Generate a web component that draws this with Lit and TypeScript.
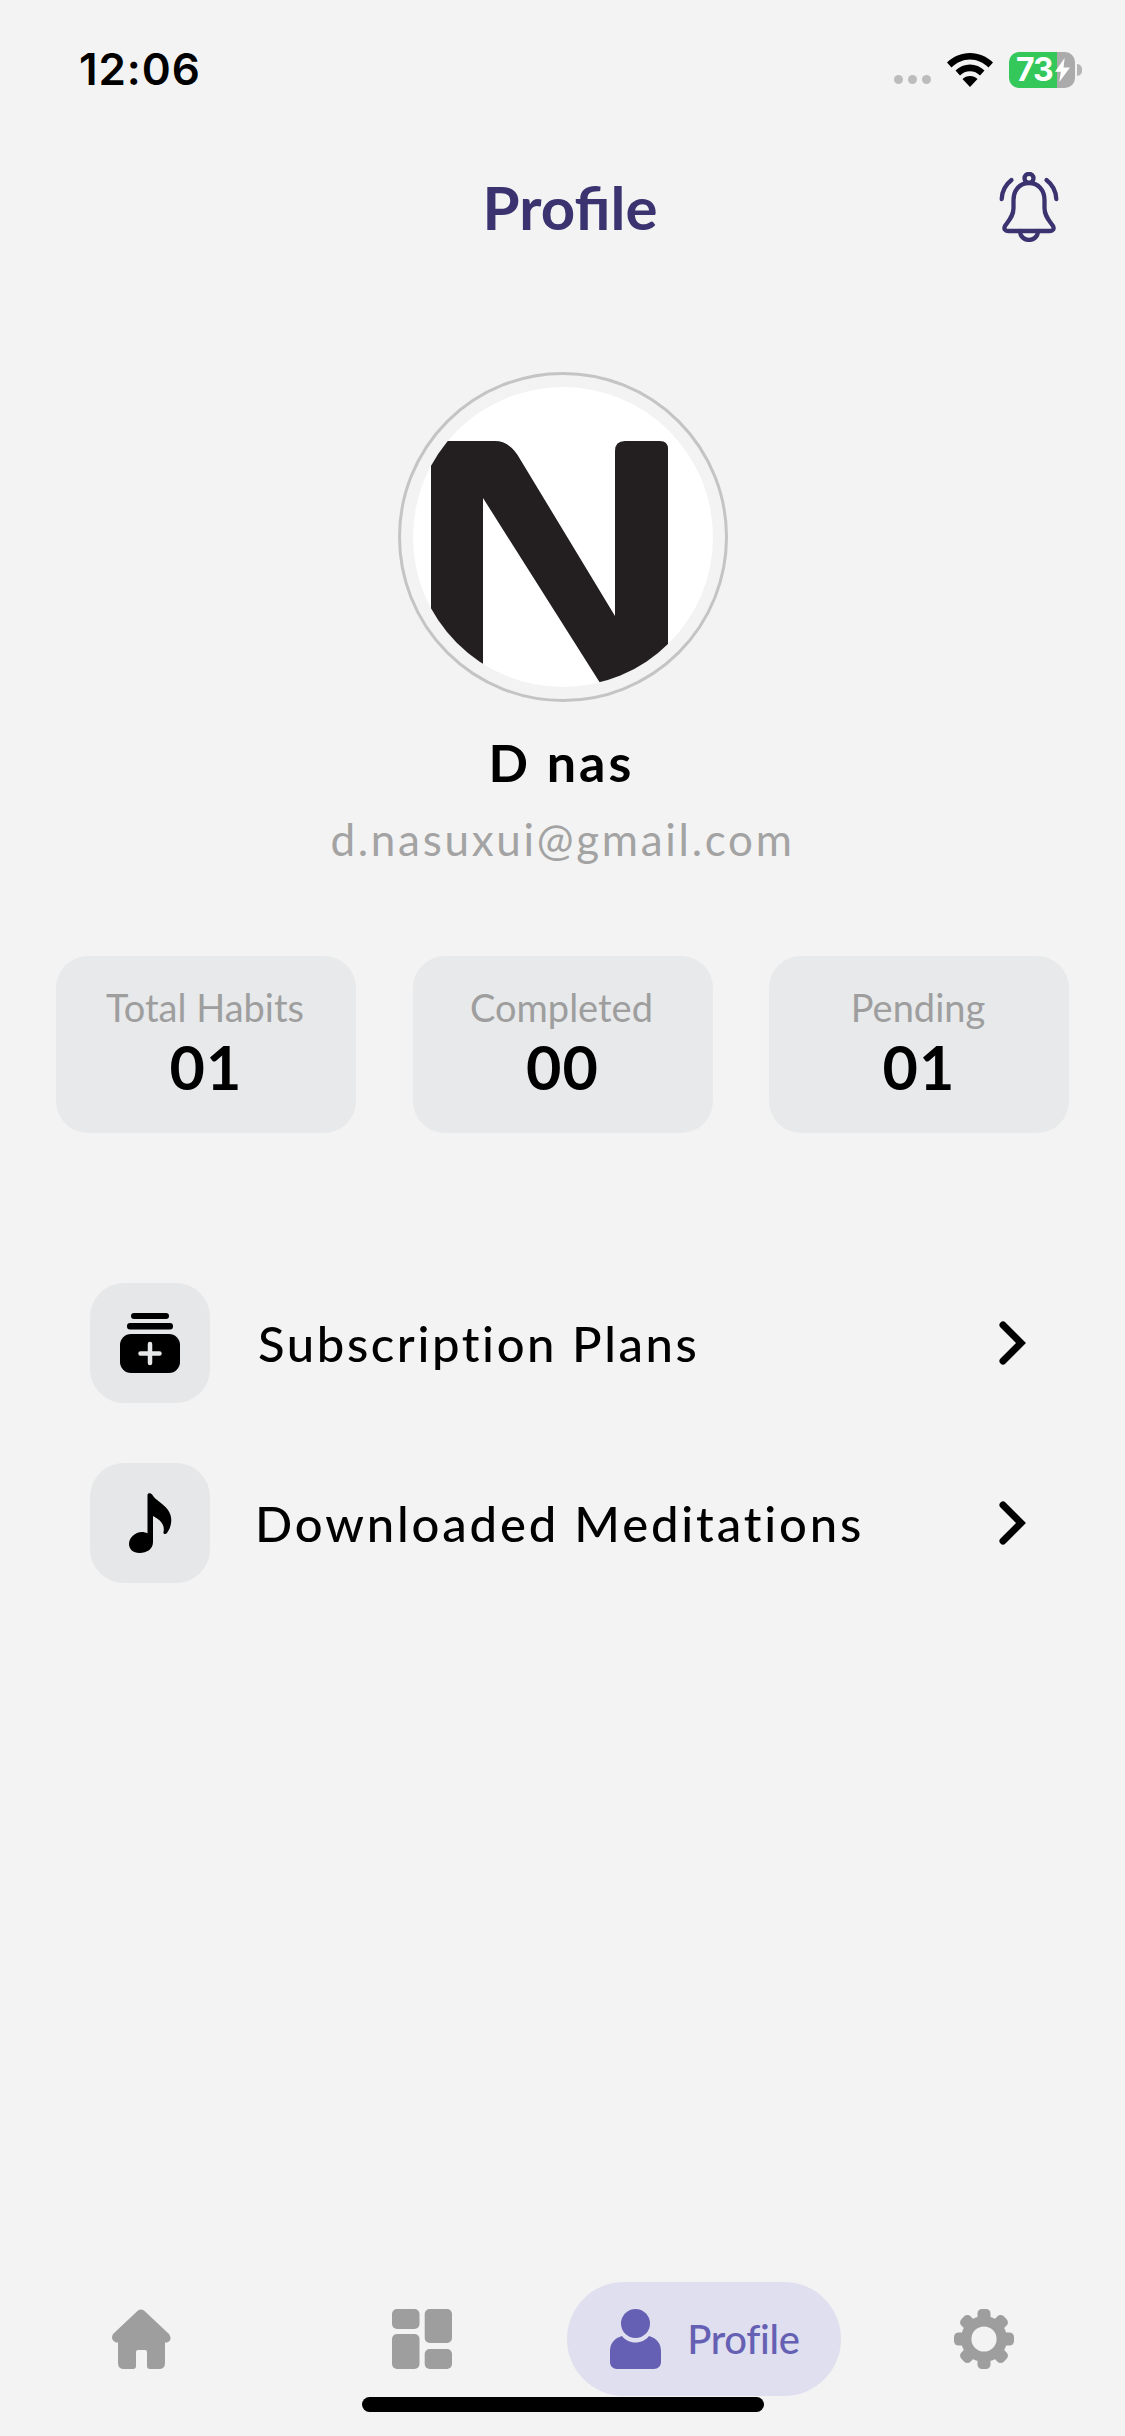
import { LitElement, html, css, svg, unsafeCSS } from "lit";
import { customElement } from "lit/decorators.js";

const FONT = unsafeCSS(`"Lato", "Noto Sans", sans-serif`);

@customElement("app-root")
export class AppRoot extends LitElement {
  static styles = css`
    :host { display: block; width: 1125px; height: 2436px; background: #f3f3f3; font-family: ${FONT}; overflow: hidden; }
    .page { display: flex; flex-direction: column; height: 2436px; }
    .status { display: flex; align-items: center; justify-content: space-between; height: 51px; margin-top: 44px; padding: 0 43px 0 79px; }
    .time { font: 600 44px/51px "Inter", sans-serif; color: #000; letter-spacing: 0.9px; }
    .sys { display: flex; align-items: center; }
    .dots { display: flex; gap: 5px; margin-right: 16px; margin-top: 20px; }
    .dots i { width: 9px; height: 9px; border-radius: 50%; background: #bcbcbc; display: block; }
    .wifi { display: block; margin-right: 16px; }
    .batt { width: 66px; height: 36px; border-radius: 10px; background: linear-gradient(90deg, #34c759 0 48px, #ababab 48px); color: #fff; font: 700 32px/36px "Inter", sans-serif; display: flex; align-items: center; padding-left: 7px; box-sizing: border-box; letter-spacing: -1px; }
    .batt svg { margin-left: 2px; }
    .tip { width: 5px; height: 12px; border-radius: 0 6px 6px 0; background: #b5b5b5; margin-left: 2px; }
    .head { display: grid; grid-template-columns: 1fr auto 1fr; align-items: center; margin-top: 72px; height: 80px; padding: 0 66px 0 81px; }
    .title { grid-column: 2; font: 700 60px/80px ${FONT}; color: #3b3370; }
    .bell { justify-self: end; display: block; }
    .avatar { align-self: center; margin-top: 125px; width: 330px; height: 330px; box-sizing: border-box; border: 3px solid #c4c4c4; border-radius: 50%; display: flex; align-items: center; justify-content: center; }
    .name { margin-top: 28px; padding-right: 2px; text-align: center; font-size: 52px; line-height: 64px; font-weight: 700; color: #000; letter-spacing: 3px; }
    .email { margin-top: 17px; text-align: center; font-size: 44px; line-height: 56px; color: #a3a3a3; letter-spacing: 2.7px; }
    .stats { display: grid; grid-template-columns: repeat(3, 300px); justify-content: space-between; padding: 0 56px; margin-top: 89px; }
    .stat { height: 177px; border-radius: 32px; background: #e8e9ea; display: flex; flex-direction: column; align-items: center; padding-top: 29px; box-sizing: border-box; }
    .stat .l { font-size: 38px; line-height: 44px; color: #9e9e9e; padding-right: 2px; }
    .stat .v { font-size: 61px; line-height: 66px; font-weight: 700; color: #000; letter-spacing: 1px; margin-top: 5px; }
    .menu { display: flex; flex-direction: column; gap: 60px; margin-top: 150px; padding: 0 98px 0 90px; }
    .row { display: flex; align-items: center; height: 120px; }
    .ic { width: 120px; height: 120px; border-radius: 34px; background: #e6e7e8; display: flex; align-items: center; justify-content: center; flex: none; }
    .row .t { flex: 1; font-size: 49px; font-weight: 500; color: #000; letter-spacing: 2.6px; margin-left: 48px; }
    .row.b .t { margin-left: 45px; letter-spacing: 2.85px; }
    .spacer { flex: 1; }
    .nav { display: grid; grid-template-columns: repeat(4, 1fr); align-items: center; height: 114px; }
    .nav > * { justify-self: center; }
    .pill { display: flex; align-items: center; gap: 26px; height: 114px; width: 274px; margin-left: 2px; box-sizing: border-box; padding-left: 43px; border-radius: 57px; background: #dfdfef; color: #6660b4; font-size: 40px; font-weight: 500; letter-spacing: -0.3px; }
    .bar { align-self: center; width: 402px; height: 15px; border-radius: 8px; background: #000; margin: 1px 0 24px; }
    svg { display: block; flex: none; }
  `;

  render() {
    const chevron = html`<svg width="32" height="44" viewBox="0 0 32 44" fill="none" stroke="#000" stroke-width="7" stroke-linecap="round" stroke-linejoin="miter"><path d="M8 4l18 18L8 40"/></svg>`;
    return html`<div class="page">
      <div class="status">
        <div class="time">12:06</div>
        <div class="sys">
          <div class="dots"><i></i><i></i><i></i></div>
          <svg class="wifi" width="46" height="34" viewBox="0 0 46 34"><path fill="#000" d="M23 0C14 0 6.500 3.500 0 9.500l4.500 5C9.500 9.500 16 6.500 23 6.500s13.500 3 18.500 8l4.500-5C39.500 3.500 32 0 23 0z"/><path fill="#000" d="M23 11.500c-5.500 0-10.500 2-14.500 6l4.500 5c2.800-2.800 6-4.300 10-4.300s7.200 1.500 10 4.300l4.500-5c-4-4-9-6-14.500-6z"/><path fill="#000" d="M23 23c-3 0-5.500 1-7.500 3L23 34l7.500-8c-2-2-4.500-3-7.500-3z"/></svg>
          <div class="batt">73<svg width="15" height="24" viewBox="0 0 14 28" preserveAspectRatio="none"><path fill="#fff" d="M9 0 0 16h5.500L4 28l10-17H8z"/></svg></div>
          <div class="tip"></div>
        </div>
      </div>
      <div class="head">
        <div class="title">Profile</div>
        <svg class="bell" width="60" height="70" viewBox="0 0 60 70" fill="none" stroke="#3b3370" stroke-width="4.300" stroke-linecap="round" stroke-linejoin="round"><circle cx="30" cy="6.300" r="4.500"/><path d="M30 11C20 11 14.500 19 14.500 28V36C14.500 44 10 48 6 54C4.500 57 6 59 9 59H51C54 59 55.500 57 54 54C50 48 45.500 44 45.500 36V28C45.500 19 40 11 30 11Z"/><path d="M21 59C21 65 26 68 30 68S39 65 39 59"/><path d="M12.500 8C6 13 3 20 2.700 27"/><path d="M47.500 8C54 13 57 20 57.300 27"/></svg>
      </div>
      <div class="avatar">
        <svg width="300" height="300" viewBox="413 386 300 300"><defs><clipPath id="c"><circle cx="563" cy="536" r="150"/></clipPath></defs><circle cx="563" cy="536" r="150" fill="#fff"/><path clip-path="url(#c)" fill="#231f20" d="M431 440H495Q510 440 520 458L615 615V450Q615 440 625 440H660Q668 440 668 448V700H611.500L483 497V700H431Z"/></svg>
      </div>
      <div class="name">D nas</div>
      <div class="email">d.nasuxui@gmail.com</div>
      <div class="stats">
        <div class="stat"><div class="l">Total Habits</div><div class="v">01</div></div>
        <div class="stat"><div class="l">Completed</div><div class="v">00</div></div>
        <div class="stat"><div class="l">Pending</div><div class="v">01</div></div>
      </div>
      <div class="menu">
        <div class="row">
          <div class="ic"><svg width="60" height="60" viewBox="0 0 60 60"><rect x="11" y="0" width="38" height="6" rx="3"/><rect x="7" y="10" width="46" height="6.500" rx="3"/><rect x="0" y="21" width="60" height="39" rx="11"/><path d="M30 31v19M20.500 40.500h19" stroke="#e6e7e8" stroke-width="4.500" stroke-linecap="round"/></svg></div>
          <div class="t">Subscription Plans</div>
          ${chevron}
        </div>
        <div class="row b">
          <div class="ic"><svg width="44" height="62" viewBox="0 0 44 62"><path d="M19.500 3C19.500 .5 23 .5 24.500 3C27 8 35 11 40 18C45 25 44 34 39 41C37.500 43 35 42 35.500 40C37 33 33 28 25 24V50C25 57 19 61 11.500 61C5 61 1 57 1 52C1 46 7 40 14 40C16 40 18 40.500 19.500 41.500Z"/></svg></div>
          <div class="t">Downloaded Meditations</div>
          ${chevron}
        </div>
      </div>
      <div class="spacer"></div>
      <div class="nav">
        <svg width="60" height="60" viewBox="0 0 60 60" fill="#9e9e9e"><path d="M27 1.500Q30-.5 33 1.500L58 25Q62 31 56 33.500H54V54Q54 60 48 60H39Q36 60 36 57V43Q36 41 34 41H27Q25 41 25 43V57Q25 60 22 60H13Q7 60 7 54V33.500H5Q-1 31 2 25Z"/></svg>
        <svg width="60" height="60" viewBox="0 0 60 60" fill="#9e9e9e"><rect width="27.500" height="20" rx="5"/><rect y="25" width="27.500" height="35" rx="5"/><rect x="32.700" width="27.300" height="34" rx="5"/><rect x="32.700" y="40" width="27.300" height="20" rx="5"/></svg>
        <div class="pill">
          <svg width="51" height="60" viewBox="0 0 51 60" fill="#6660b4"><circle cx="25.500" cy="14.500" r="14.500"/><path d="M12 27c3 4 8 6.500 13.500 6.500S36 31 39 27c7 2 12 7 12 15v11c0 4-3 7-7 7H7c-4 0-7-3-7-7V42c0-8 5-13 12-15z"/></svg>
          <span>Profile</span>
        </div>
        <svg width="60" height="60" viewBox="0 0 60 60" fill="#9e9e9e"><circle cx="30" cy="30" r="17.800" fill="none" stroke="#9e9e9e" stroke-width="10.400"/>${[0, 45, 90, 135, 180, 225, 270, 315].map((a) => svg`<rect x="23.500" y="0" width="13" height="14" rx="4.500" transform="rotate(${a} 30 30)"/>`)}</svg>
      </div>
      <div class="bar"></div>
    </div>`;
  }
}
